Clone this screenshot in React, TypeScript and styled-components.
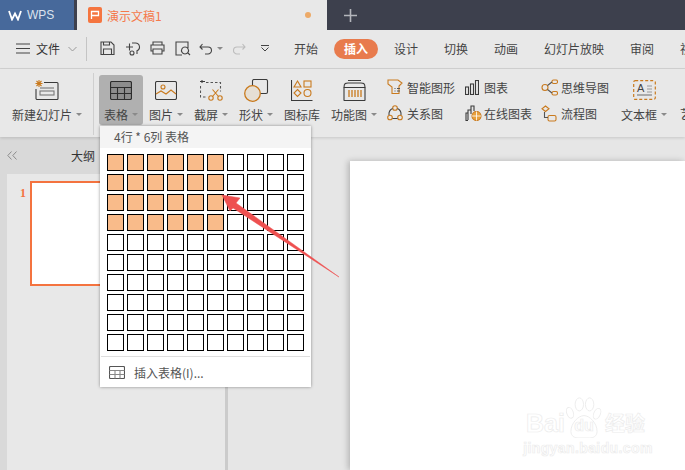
import React from 'react';
import styled, { createGlobalStyle } from 'styled-components';

const GlobalStyle = createGlobalStyle`
  html, body {
    margin: 0;
    padding: 0;
    background: #e6e6e6;
  }
  * {
    box-sizing: border-box;
  }
`;

const Frame = styled.div`
  position: relative;
  width: 685px;
  height: 470px;
  overflow: hidden;
  display: flex;
  flex-direction: column;
  background: #e8e8e8;
  color: #444;
  font-family: 'Noto Sans CJK SC', 'Liberation Sans', sans-serif;
  font-size: 12px;
`;

// window tabs
const TabBar = styled.div`
  height: 30px;
  flex: none;
  display: flex;
  background: #3d404d;
`;
const HomeTab = styled.div`
  width: 74px;
  display: flex;
  align-items: center;
  gap: 5px;
  padding-left: 8px;
  background: #47699b;
  color: #dbe3ee;
  font-family: 'Liberation Sans', sans-serif;
  font-size: 12px;
`;
const DocTab = styled.div`
  width: 250px;
  margin-left: 3px;
  display: flex;
  align-items: center;
  padding: 0 11px;
  background: #e8e8e8;
  color: #f5794a;
`;
const DocTitle = styled.span`
  margin-left: 5px;
  flex: 1;
`;
const UnsavedDot = styled.span`
  width: 6px;
  height: 6px;
  border-radius: 50%;
  background: #edaa68;
  margin-right: 5px;
`;
const NewTab = styled.div`
  margin-left: 17px;
  display: flex;
  align-items: center;
`;

// menu row
const MenuRow = styled.div`
  height: 39px;
  flex: none;
  display: flex;
  align-items: center;
  padding: 0 0 1px 16px;
  border-bottom: 1px solid #d3d3d3;
  > svg {
    flex: none;
  }
`;
const FileLabel = styled.span`
  flex: none;
  margin: 0 8px 0 6px;
  color: #333;
  white-space: nowrap;
`;
const MenuDivider = styled.span`
  flex: none;
  width: 1px;
  height: 24px;
  margin: 0 8px 0 9px;
  background: #c4c4c4;
`;
const QuickButton = styled.span<{ $w: number }>`
  width: ${(p) => p.$w}px;
  flex: none;
  display: flex;
  align-items: center;
  justify-content: center;
  gap: 4px;
`;
const TabStrip = styled.div`
  flex: none;
  margin-left: 4px;
  display: flex;
  align-items: center;
`;
const MenuTab = styled.div<{ $w?: number }>`
  width: ${(p) => p.$w ?? 50}px;
  flex: none;
  text-align: center;
  white-space: nowrap;
`;
const ActivePill = styled.span`
  display: block;
  width: 44px;
  height: 20px;
  margin: 0 auto;
  border-radius: 10px;
  background: #e87b4d;
  color: #fff;
  font-weight: 700;
  line-height: 20px;
`;

// ribbon
const Ribbon = styled.div`
  position: relative;
  height: 68px;
  flex: none;
  display: flex;
  padding: 6px 0 0 7px;
  box-shadow: 0 1px 3px rgba(0, 0, 0, 0.14);
  z-index: 1;
`;
const RibbonItem = styled.div<{ $w: number; $active?: boolean }>`
  width: ${(p) => p.$w}px;
  height: 50px;
  flex: none;
  display: flex;
  flex-direction: column;
  align-items: center;
  border-radius: 3px;
  background: ${(p) => (p.$active ? '#b0b0b0' : 'transparent')};
`;
const ItemIcon = styled.div`
  height: 30px;
  display: flex;
  align-items: center;
`;
const ItemLabel = styled.div`
  height: 19px;
  display: flex;
  align-items: center;
  gap: 4px;
  white-space: nowrap;
`;
const Caret = styled.span`
  width: 0;
  height: 0;
  border: 3px solid transparent;
  border-top: 3px solid #8a8a8a;
  border-bottom: 0;
`;
const RibbonDivider = styled.span`
  flex: none;
  width: 1px;
  height: 62px;
  margin: -2px 5px 0 6px;
  background: #cfcfcf;
`;
const StackColumn = styled.div<{ $w: number; $ml?: number }>`
  width: ${(p) => p.$w}px;
  margin-left: ${(p) => p.$ml ?? 0}px;
  flex: none;
  display: flex;
  flex-direction: column;
  gap: 2px;
`;
const StackRow = styled.div`
  height: 24px;
  display: flex;
  align-items: center;
  white-space: nowrap;
`;
const StackIcon = styled.span<{ $w: number }>`
  width: ${(p) => p.$w}px;
  flex: none;
  display: flex;
  align-items: center;
`;

// lower part of the window
const Workspace = styled.div`
  flex: 1;
  display: flex;
  min-height: 0;
`;
const SidePane = styled.div`
  width: 228px;
  flex: none;
  display: flex;
  flex-direction: column;
  padding-left: 7px;
  background: #d9d9d9;
  border-right: 3px solid #cbcbcb;
`;
const SideHeader = styled.div`
  height: 37px;
  flex: none;
  display: flex;
  align-items: center;
  color: #333;
`;
const CollapseMark = styled.span`
  width: 64px;
  display: flex;
`;
const SlideList = styled.div`
  flex: 1;
  display: flex;
  align-items: flex-start;
  padding: 7px 0 0 13px;
  background: #e8e8e8;
`;
const SlideNumber = styled.span`
  width: 10px;
  margin-top: 5px;
  color: #f4733f;
  font-family: 'Liberation Serif', serif;
  font-size: 12px;
  font-weight: 700;
`;
const SlideThumb = styled.div`
  width: 185px;
  height: 105px;
  background: #fff;
  border: 2px solid #f4733f;
`;
const Stage = styled.div`
  flex: 1;
  padding: 24px 0 0 122px;
  background: #e6e6e6;
`;
const SlidePage = styled.div`
  width: 100%;
  height: 100%;
  background: #fff;
  box-shadow: -2px 0 6px rgba(0, 0, 0, 0.22);
`;

// table picker
const Picker = styled.div`
  position: absolute;
  left: 100px;
  top: 126px;
  width: 211px;
  height: 261px;
  display: flex;
  flex-direction: column;
  background: #fff;
  box-shadow: 0 0 3px rgba(0, 0, 0, 0.4);
  z-index: 2;
`;
const PickerHead = styled.div`
  height: 22px;
  flex: none;
  padding-left: 14px;
  background: #f4f4f4;
  color: #555;
  line-height: 22px;
`;
const CellGrid = styled.div`
  display: grid;
  grid-template-columns: repeat(10, 17px);
  grid-auto-rows: 17px;
  gap: 3px;
  padding: 6px 0 0 7px;
`;
const Cell = styled.span<{ $on: boolean }>`
  border: 1px solid #000;
  background: ${(p) => (p.$on ? '#f9bb8a' : '#fff')};
`;
const PickerFoot = styled.div`
  flex: 1;
  margin: 5px 1px 0;
  display: flex;
  align-items: center;
  gap: 9px;
  padding-left: 8px;
  border-top: 1px solid #dedede;
  color: #555;
`;

// annotation + watermark laid over the screenshot
const ArrowMark = styled.svg`
  position: absolute;
  left: 0;
  top: 0;
  z-index: 3;
`;
const Watermark = styled.div`
  position: absolute;
  left: 526px;
  top: 396px;
  width: 124px;
  display: flex;
  flex-direction: column;
  align-items: center;
  color: #fff;
  font-family: 'Liberation Sans', sans-serif;
  -webkit-text-stroke: 0.7px #ececec;
  z-index: 1;
`;
const MarkRow = styled.div`
  height: 42px;
  width: 100%;
  display: flex;
  align-items: flex-end;
  font-size: 25px;
  font-weight: 700;
  line-height: 30px;
`;
const Paw = styled.span`
  position: relative;
  width: 38px;
  height: 42px;
  display: flex;
  align-items: flex-end;
  justify-content: center;
  font-size: 16px;
  line-height: 24px;
`;
const PawText = styled.span`
  position: relative;
`;
const PawDrawing = styled.svg`
  position: absolute;
  inset: 0;
`;
const MarkCjk = styled.span`
  margin-left: 2px;
  font-family: 'Noto Sans CJK SC', sans-serif;
  font-size: 20px;
`;
const MarkUrl = styled.div`
  margin-top: 3px;
  font-size: 14px;
  font-weight: 700;
  line-height: 15px;
  letter-spacing: 0.4px;
`;

const DARK = '#3a3a3a';
const ORANGE = '#c97a1e';

type GlyphProps = { w: number; h: number; children: React.ReactNode; stroke?: string };

function Glyph({ w, h, children, stroke = DARK }: GlyphProps) {
  return (
    <svg width={w} height={h} viewBox={`0 0 ${w} ${h}`} fill="none" stroke={stroke} strokeWidth="1.1">
      {children}
    </svg>
  );
}

const NewSlideIcon = () => (
  <Glyph w={24} h={20}>
    <path d="M9 2.5h13a1 1 0 0 1 1 1v15a1 1 0 0 1-1 1H2a1 1 0 0 1-1-1V9" />
    <rect x="5" y="11" width="14" height="4" stroke="#777" />
    <path d="M5 8h14" stroke="#777" />
    <path d="M4 0v7M.5 3.5h7M1.5 1l5 5M6.5 1l-5 5" stroke={ORANGE} />
  </Glyph>
);
const TableIcon = () => (
  <Glyph w={22} h={19}>
    <rect x=".5" y=".5" width="21" height="18" rx="1.5" fill="#8d8d8d" stroke="#2d2d2d" strokeWidth="1.2" />
    <path d="M.5 6.5h21M.5 12.5h21M7.5 6.5v12M14.5 6.5v12" stroke="#2d2d2d" />
  </Glyph>
);
const PictureIcon = () => (
  <Glyph w={22} h={19}>
    <rect x=".5" y=".5" width="21" height="18" rx="1.5" />
    <circle cx="8" cy="6" r="2" stroke={ORANGE} />
    <path d="M1 13l5-3 5 3 5-4 5 4" stroke={ORANGE} />
  </Glyph>
);
const ScreenshotIcon = () => (
  <Glyph w={23} h={21}>
    <path d="M2 0v3M0 1.500h5" />
    <path d="M6 2.500h14.500v9M.5 6v11h6" stroke="#555" strokeDasharray="2.500 2" />
    <circle cx="11" cy="18" r="2.200" stroke={ORANGE} />
    <circle cx="20" cy="18" r="2.200" stroke={ORANGE} />
    <path d="M12.500 16.500l6-7M18.500 16.500l-6-7" stroke={ORANGE} />
  </Glyph>
);
const ShapeIcon = () => (
  <Glyph w={25} h={23}>
    <rect x="8.500" y=".5" width="15" height="14" rx="1.500" />
    <circle cx="8.500" cy="14.500" r="7.800" fill="#e6dfd4" stroke={ORANGE} strokeWidth="1.300" />
  </Glyph>
);
const IconLibIcon = () => (
  <Glyph w={22} h={22}>
    <path d="M.5 1v20.500h21" />
    <path d="M6.500 2l3.500 6H3z" stroke={ORANGE} />
    <rect x="13" y="2" width="7" height="6" stroke={ORANGE} />
    <path d="M6.500 10.500l3.500 3.500-3.500 3.500L3 14z" stroke={ORANGE} />
    <circle cx="16.500" cy="14" r="3.500" stroke={ORANGE} />
  </Glyph>
);
const FunctionIcon = () => (
  <Glyph w={23} h={22}>
    <path d="M1 8.500V21a.5.5 0 0 0 .5.5h20a.5.5 0 0 0 .5-.5V8.500" />
    <path d="M1 8.500C1 4 3 4 5 4h13c2 0 4 0 4 4.500zM5 1.500h13" />
    <path d="M6 11v7M9 11v7M12 11v7M15 11v7M18 11v7" stroke={ORANGE} strokeWidth="1.300" />
  </Glyph>
);
const SmartArtIcon = () => (
  <Glyph w={16} h={16}>
    <path d="M1 1h10l4 3-3 3v7.500H5V8L1 5z" stroke={ORANGE} />
    <path d="M7.500 9.500h1M10 9.500h3M7.500 12h1M10 12h3" stroke="#555" />
  </Glyph>
);
const RelationIcon = () => (
  <Glyph w={16} h={16} stroke={ORANGE}>
    <circle cx="8" cy="3" r="2.300" />
    <circle cx="3" cy="12.500" r="2.300" />
    <circle cx="13" cy="12.500" r="2.300" />
    <path d="M5.500 3.500A6.500 6.500 0 0 0 2 10M10.500 3.500A6.500 6.500 0 0 1 14 10M5.500 13.500h5" stroke="#444" />
  </Glyph>
);
const ChartIcon = () => (
  <Glyph w={14} h={15}>
    <rect x=".5" y="7" width="3" height="7.500" />
    <rect x="5.500" y="4" width="3" height="10.500" />
    <rect x="10.500" y=".5" width="3" height="14" />
  </Glyph>
);
const OnlineChartIcon = () => (
  <Glyph w={17} h={16}>
    <path d="M3 15.500H1V8h2M3 15V5h3M6 9V1h3v5" />
    <circle cx="11.500" cy="11" r="4.500" fill="#e8a13c" stroke={ORANGE} />
    <path d="M7 11h9M11.500 6.500v9" stroke="#fff" strokeWidth=".8" />
  </Glyph>
);
const MindMapIcon = () => (
  <Glyph w={17} h={17} stroke={ORANGE}>
    <circle cx="4" cy="8.500" r="3" />
    <rect x="11" y="1" width="5.500" height="3.500" rx="1.500" />
    <rect x="11" y="12.500" width="5.500" height="3.500" rx="1.500" />
    <path d="M6.500 6.500L11 3M6.500 10.500L11 14" stroke="#555" />
  </Glyph>
);
const FlowIcon = () => (
  <Glyph w={17} h={17} stroke={ORANGE}>
    <path d="M4.500 1L8 3.800 4.500 6.500 1 3.800z" />
    <rect x="7" y="10.500" width="8" height="5.500" rx="1.500" />
    <path d="M3.500 7v5.500H7" stroke="#555" />
  </Glyph>
);
const TextBoxIcon = () => (
  <Glyph w={23} h={20}>
    <rect x=".7" y=".7" width="21.600" height="18.600" rx="1.500" stroke={ORANGE} strokeWidth="1.200" strokeDasharray="3 2" />
    <text x="4" y="12" fontSize="11" fill="#444" stroke="none" fontFamily="Liberation Sans">
      A
    </text>
    <path d="M4 15h15" stroke="#777" />
    <path d="M14 6h5M14 9h5M14 12h5" stroke="#999" />
  </Glyph>
);
const PickerFootIcon = () => (
  <Glyph w={16} h={13} stroke="#555">
    <rect x=".5" y=".5" width="15" height="12" rx="1" />
    <path d="M.5 4.500h15M.5 8.500h15M6 4.500v8M11 4.500v8" stroke="#888" />
  </Glyph>
);

const quickIcons = [
  { w: 25, d: 'M1 1h10l3 3v9.500H1zM3.500 13.500V8h8v5.500M3.500 1v3h6V1' },
  { w: 25, d: 'M1 6h7M4.500 2.500v7M7 2h3.500a4 4 0 0 1 1.500 7.700V13M5 12a2 2 0 1 0 4 0 2 2 0 1 0-4 0' },
  { w: 25, d: 'M3 4V1h9v3M3 10H1V4h13v6h-2M3 8h9v5H3z' },
  { w: 26, d: 'M13 7V1H1v13h6M10 6a3.500 3.500 0 1 0 .01 0M12.500 11.500L15 14' }
];

const ribbonItems = [
  { w: 44, label: '表格', icon: <TableIcon />, active: true, caret: true },
  { w: 46, label: '图片', icon: <PictureIcon />, caret: true },
  { w: 44, label: '截屏', icon: <ScreenshotIcon />, caret: true },
  { w: 46, label: '形状', icon: <ShapeIcon />, caret: true },
  { w: 46, label: '图标库', icon: <IconLibIcon /> },
  { w: 58, label: '功能图', icon: <FunctionIcon />, caret: true }
];

const stackColumns = [
  {
    w: 78,
    ml: 4,
    iconW: 20,
    rows: [
      { label: '智能图形', icon: <SmartArtIcon /> },
      { label: '关系图', icon: <RelationIcon /> }
    ]
  },
  {
    w: 76,
    iconW: 19,
    rows: [
      { label: '图表', icon: <ChartIcon /> },
      { label: '在线图表', icon: <OnlineChartIcon /> }
    ]
  },
  {
    w: 76,
    iconW: 20,
    rows: [
      { label: '思维导图', icon: <MindMapIcon /> },
      { label: '流程图', icon: <FlowIcon /> }
    ]
  }
];

const menuTabs = [
  { label: '设计' },
  { label: '切换' },
  { label: '动画' },
  { label: '幻灯片放映', w: 86 },
  { label: '审阅' },
  { label: '视图' }
];

const ROWS = 10;
const COLS = 10;
const cells = Array.from({ length: ROWS * COLS }, (_, i) => i % COLS < 6 && i < 4 * COLS);

export default function App() {
  return (
    <Frame>
      <GlobalStyle />
      <TabBar>
        <HomeTab>
          <svg width="14" height="11" viewBox="0 0 14 11" fill="none" stroke="#fff" strokeWidth="1.800">
            <path d="M1 1l3 8.500 3-6 3 6 3-8.500" />
          </svg>
          WPS
        </HomeTab>
        <DocTab>
          <svg width="14" height="16" viewBox="0 0 14 16">
            <rect width="14" height="16" rx="2" fill="#f5753f" />
            <path d="M3.500 12V4.500h7v4h-7" fill="none" stroke="#fff" strokeWidth="1.300" />
          </svg>
          <DocTitle>演示文稿1</DocTitle>
          <UnsavedDot />
        </DocTab>
        <NewTab>
          <svg width="13" height="13" viewBox="0 0 13 13" stroke="#b4b6bc" strokeWidth="1.600">
            <path d="M6.500 0v13M0 6.500h13" />
          </svg>
        </NewTab>
      </TabBar>

      <MenuRow>
        <svg width="14" height="11" viewBox="0 0 14 11" stroke="#444">
          <path d="M0 1h14M0 5.500h14M0 10h14" />
        </svg>
        <FileLabel>文件</FileLabel>
        <svg width="9" height="6" viewBox="0 0 9 6" fill="none" stroke="#999">
          <path d="M.5 1l4 4 4-4" />
        </svg>
        <MenuDivider />
        {quickIcons.map((q) => (
          <QuickButton key={q.d} $w={q.w}>
            <svg width="16" height="15" viewBox="0 0 16 15" fill="none" stroke="#444" strokeWidth="1.100">
              <path d={q.d} />
            </svg>
          </QuickButton>
        ))}
        <QuickButton $w={30}>
          <svg width="14" height="12" viewBox="0 0 14 12" fill="none" stroke="#444" strokeWidth="1.100">
            <path d="M3.500 1L1 4l2.500 2.500M1 4h8a3.500 3.500 0 0 1 0 7H6" />
          </svg>
          <Caret />
        </QuickButton>
        <QuickButton $w={26}>
          <svg width="13" height="12" viewBox="0 0 13 12" fill="none" stroke="#bdbdbd" strokeWidth="1.100">
            <path d="M9.500 1L12 4 9.500 6.500M12 4H4a3.500 3.500 0 0 0 0 7h3" />
          </svg>
        </QuickButton>
        <QuickButton $w={25}>
          <svg width="10" height="7" viewBox="0 0 10 7" fill="none" stroke="#444">
            <path d="M1 .5h8M1.500 2.500L5 6l3.500-3.500" />
          </svg>
        </QuickButton>
        <TabStrip>
          <MenuTab>开始</MenuTab>
          <MenuTab>
            <ActivePill>插入</ActivePill>
          </MenuTab>
          {menuTabs.map((t) => (
            <MenuTab key={t.label} $w={t.w}>
              {t.label}
            </MenuTab>
          ))}
        </TabStrip>
      </MenuRow>

      <Ribbon>
        <RibbonItem $w={80}>
          <ItemIcon>
            <NewSlideIcon />
          </ItemIcon>
          <ItemLabel>
            新建幻灯片
            <Caret />
          </ItemLabel>
        </RibbonItem>
        <RibbonDivider />
        {ribbonItems.map((item) => (
          <RibbonItem key={item.label} $w={item.w} $active={item.active}>
            <ItemIcon>{item.icon}</ItemIcon>
            <ItemLabel>
              {item.label}
              {item.caret && <Caret />}
            </ItemLabel>
          </RibbonItem>
        ))}
        {stackColumns.map((col) => (
          <StackColumn key={col.rows[0].label} $w={col.w} $ml={col.ml}>
            {col.rows.map((row) => (
              <StackRow key={row.label}>
                <StackIcon $w={col.iconW}>{row.icon}</StackIcon>
                {row.label}
              </StackRow>
            ))}
          </StackColumn>
        ))}
        <RibbonItem $w={54}>
          <ItemIcon>
            <TextBoxIcon />
          </ItemIcon>
          <ItemLabel>
            文本框
            <Caret />
          </ItemLabel>
        </RibbonItem>
        <StackColumn $w={20} $ml={9}>
          <StackRow />
          <StackRow>艺术字</StackRow>
        </StackColumn>
      </Ribbon>

      <Workspace>
        <SidePane>
          <SideHeader>
            <CollapseMark>
              <svg width="10" height="9" viewBox="0 0 10 9" fill="none" stroke="#8c8c8c">
                <path d="M4.500 .5L.8 4.500l3.700 4M9.500 .5L5.800 4.500l3.700 4" />
              </svg>
            </CollapseMark>
            大纲
          </SideHeader>
          <SlideList>
            <SlideNumber>1</SlideNumber>
            <SlideThumb />
          </SlideList>
        </SidePane>
        <Stage>
          <SlidePage />
        </Stage>
      </Workspace>

      <Picker>
        <PickerHead>4行 * 6列 表格</PickerHead>
        <CellGrid>
          {cells.map((on, i) => (
            <Cell key={i} $on={on} />
          ))}
        </CellGrid>
        <PickerFoot>
          <PickerFootIcon />
          插入表格(I)...
        </PickerFoot>
      </Picker>

      <ArrowMark width="685" height="470" viewBox="0 0 685 470">
        <polygon
          points="222,195 240,198 236,203 339,277 233,208 230,211"
          fill="#ee5050"
          stroke="#ee5050"
          strokeWidth="0.5"
        />
      </ArrowMark>

      <Watermark>
        <MarkRow>
          Bai
          <Paw>
            <PawDrawing width="38" height="42" viewBox="0 0 38 45" fill="#fff" stroke="#ececec">
              <ellipse cx="4" cy="18" rx="3.500" ry="6" transform="rotate(-20 4 18)" />
              <ellipse cx="14" cy="9" rx="4.500" ry="7" />
              <ellipse cx="25" cy="9" rx="4.500" ry="7" />
              <ellipse cx="33" cy="19" rx="3.500" ry="6" transform="rotate(25 33 19)" />
              <path d="M5 38c0-9 8-17 14-17s14 8 14 17c0 5-4 7-8 7H13c-4 0-8-2-8-7z" />
            </PawDrawing>
            <PawText>du</PawText>
          </Paw>
          <MarkCjk>经验</MarkCjk>
        </MarkRow>
        <MarkUrl>jingyan.baidu.com</MarkUrl>
      </Watermark>
    </Frame>
  );
}
